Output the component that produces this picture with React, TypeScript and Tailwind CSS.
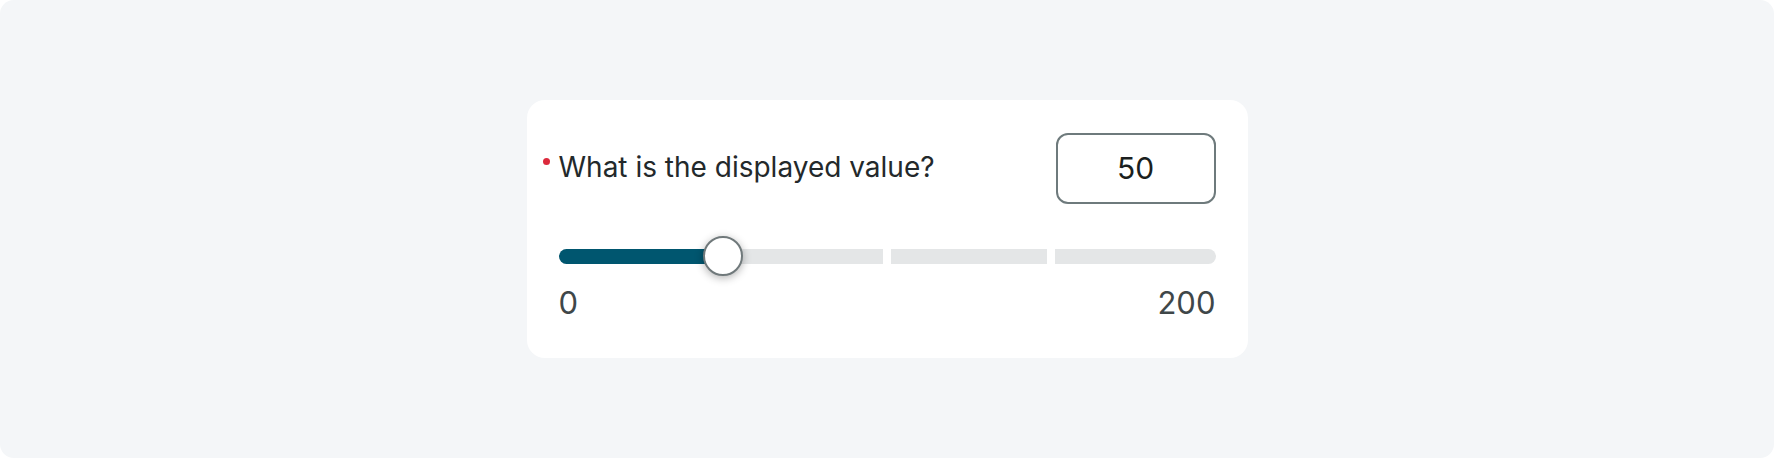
import React, { useState } from 'react';

const MIN = 0;
const MAX = 200;
const TICKS = [100, 150];

export default function App() {
  const [value] = useState(50);
  const pct = ((value - MIN) / (MAX - MIN)) * 100;

  return (
    <div className="w-full h-[458px] bg-white" style={{ fontFamily: 'Inter, "Noto Sans", sans-serif' }}>
      <div className="h-full rounded-[14px] bg-[#f4f6f8] flex items-center justify-center">
        <div className="w-[721px] h-[258px] rounded-[18px] bg-white pt-[33px] px-8">
          {/* Question row */}
          <div className="flex items-center justify-between h-[71px]">
            <div className="flex items-start -ml-4 pb-1">
              <span className="mt-[8px] w-[7px] h-[7px] rounded-full bg-[#dc2a3c]" />
              <span className="ml-[9px] text-[28px] leading-[34px] text-[#23292b]">
                What is the displayed value?
              </span>
            </div>
            <div className="w-[160px] h-[71px] rounded-[12px] border-2 border-[#6e7a7c] flex items-center justify-center text-[30px] text-[#1b1f20]">
              {value}
            </div>
          </div>

          {/* Slider */}
          <div className="relative mt-[32px] h-[40px] flex items-center">
            <div className="relative w-full h-[15px] rounded-full bg-[#e4e6e7] overflow-hidden">
              <div className="h-full bg-[#00566f]" style={{ width: `${pct}%` }} />
              {TICKS.map((t) => (
                <div
                  key={t}
                  className="absolute top-0 h-full w-[8px] -translate-x-1/2 bg-white"
                  style={{ left: `${((t - MIN) / (MAX - MIN)) * 100}%` }}
                />
              ))}
            </div>
            <div
              className="absolute top-1/2 w-[40px] h-[40px] -translate-x-1/2 -translate-y-1/2 rounded-full bg-white border-2 border-[#70797b] shadow-[0_2px_8px_rgba(0,0,0,0.3)]"
              style={{ left: `${pct}%` }}
            />
          </div>

          {/* Min / max labels */}
          <div className="mt-[8px] flex justify-between text-[31px] leading-[37px] text-[#3f4749]">
            <span>{MIN}</span>
            <span>{MAX}</span>
          </div>
        </div>
      </div>
    </div>
  );
}
